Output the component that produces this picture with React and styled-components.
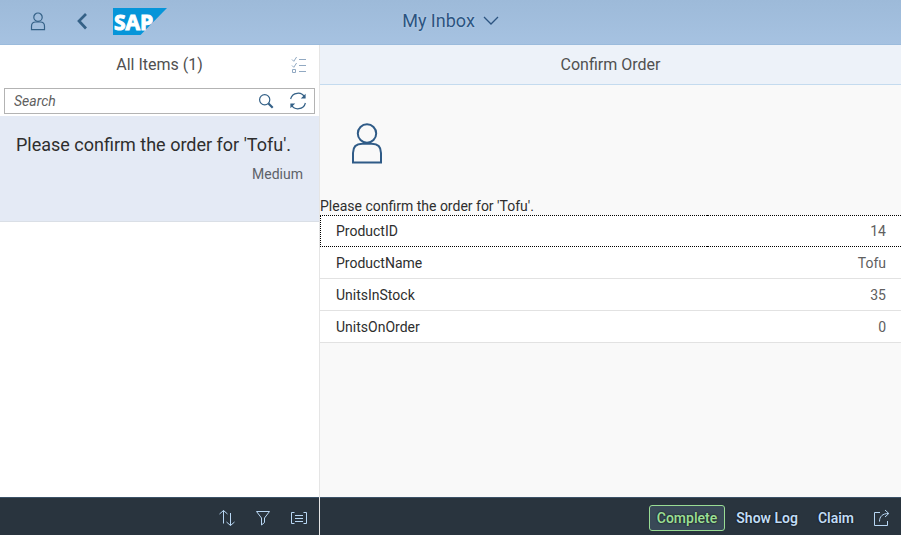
import React from "react";
import styled, { createGlobalStyle, css } from "styled-components";

const GlobalStyle = createGlobalStyle`
  *, *::before, *::after { box-sizing: border-box; }
  body {
    margin: 0;
    font-family: Roboto, "Liberation Sans", sans-serif;
    font-size: 14px;
    line-height: 16px;
    color: #2e2e2e;
    background: #f9f9f9;
  }
  button, input { font: inherit; color: inherit; }
`;

const Page = styled.div`
  display: flex;
  flex-direction: column;
  height: 100vh;
  overflow: hidden;
`;

const Shell = styled.header`
  display: grid;
  grid-template-columns: 1fr auto 1fr;
  align-items: center;
  flex: none;
  height: 45px;
  padding: 0 16px;
  background: linear-gradient(#9dbad9, #a6c2e1);
  border-bottom: 1px solid #9bbbdc;
`;

const ShellActions = styled.div`
  display: flex;
  align-items: center;
`;

const IconButton = styled.button`
  display: flex;
  align-items: center;
  justify-content: center;
  flex: none;
  width: ${(p) => p.$width || 36}px;
  height: 36px;
  padding: 0;
  border: 0;
  background: none;
  color: ${(p) => p.$color || "#346187"};
  cursor: pointer;
  svg { display: block; flex: none; }
`;

const LogoLink = styled.a`
  display: block;
  margin: 0 0 2px 9px;
  svg { display: block; }
`;

const ShellTitle = styled.button`
  display: flex;
  align-items: center;
  gap: 8px;
  padding: 0 0 2px;
  border: 0;
  background: none;
  color: #2c5480;
  font-size: 18px;
  line-height: 24px;
  text-shadow: 0 0 2px #c5daf0;
  cursor: pointer;
`;

const Body = styled.div`
  display: flex;
  flex: 1;
  min-height: 0;
`;

const Master = styled.aside`
  display: flex;
  flex-direction: column;
  flex: none;
  width: 320px;
  background: #fff;
  border-right: 1px solid #e5e5e5;
`;

const Detail = styled.main`
  display: flex;
  flex-direction: column;
  flex: 1;
  min-width: 0;
  background: #f9f9f9;
`;

const MasterHeader = styled.div`
  display: grid;
  grid-template-columns: 36px 1fr 36px;
  align-items: center;
  height: 40px;
  padding: 0 2px;
`;

const Title = styled.h1`
  margin: 0;
  font-size: 16px;
  line-height: 20px;
  font-weight: 400;
  text-align: center;
  color: #505050;
`;

const DetailHeader = styled.div`
  display: flex;
  align-items: center;
  justify-content: center;
  flex: none;
  height: 40px;
  background: #edf2f9;
  border-bottom: 1px solid #c4dbef;
`;

const SearchBox = styled.form`
  display: flex;
  align-items: center;
  flex: none;
  height: 26px;
  margin: 3px 4px 2px;
  border: 1px solid #b3b3b3;
  background: #fff;
`;

const SearchInput = styled.input`
  flex: 1;
  min-width: 0;
  height: 24px;
  padding: 0 9px;
  border: 0;
  outline: 0;
  background: none;
  &::placeholder {
    color: #606060;
    font-style: italic;
    opacity: 1;
  }
`;

const Items = styled.ul`
  flex: 1;
  margin: 0;
  padding: 0;
  list-style: none;
`;

const ItemButton = styled.button`
  display: flex;
  flex-direction: column;
  gap: 8px;
  width: 100%;
  height: 106px;
  padding: 18px 16px;
  border: 0;
  border-bottom: 1px solid #dadfe6;
  background: #e4eaf5;
  text-align: left;
  cursor: pointer;
`;

const ItemTitle = styled.span`
  font-size: 18px;
  line-height: 22px;
  white-space: nowrap;
`;

const ItemPriority = styled.span`
  align-self: flex-end;
  line-height: 20px;
  color: #5d6269;
`;

const Avatar = styled.div`
  padding: 38px 31px 33px;
  color: #2f5b87;
  svg { display: block; }
`;

const Description = styled.p`
  margin: 0;
  padding-bottom: 1px;
`;

const Properties = styled.table`
  width: 100%;
  border-collapse: separate;
  border-spacing: 0;
  background: #fff;
`;

const PropertyRow = styled.tr`
  th, td {
    height: 32px;
    padding: 0 16px;
    border-bottom: 1px solid #e2e2e2;
    font-weight: 400;
  }
  th { text-align: left; }
  td { padding-right: 15px; text-align: right; color: #606060; }
  ${(p) =>
    p.$focused &&
    css`
      th, td { border-top: 1px dotted #000; border-bottom: 1px dotted #000; }
      th { border-left: 1px dotted #000; padding-left: 15px; }
    `}
`;

const Footer = styled.footer`
  display: flex;
  align-items: center;
  justify-content: flex-end;
  flex: none;
  height: 38px;
  margin-top: auto;
  padding: ${(p) => p.$padding};
  border-top: 1px solid #3b5268;
  background: #29343e;
  color: #b8d7f4;
`;

const FooterButton = styled.button`
  height: 26px;
  margin-top: 3px;
  padding: 0 ${(p) => (p.$accept ? 7 : 9)}px;
  border: 1px solid ${(p) => (p.$accept ? "#99dc95" : "transparent")};
  border-radius: 3px;
  background: ${(p) => (p.$accept ? "#394957" : "transparent")};
  color: ${(p) => (p.$accept ? "#99dc95" : "#c0dcf5")};
  margin-right: ${(p) => (p.$accept ? 1 : 0)}px;
  font-weight: 600;
  white-space: nowrap;
  text-shadow: 0 0 2px #000;
  cursor: pointer;
`;

const FooterIcon = styled(IconButton)`
  margin-top: 3px;
  color: #b8d7f4;
`;

const Svg = ({ w, h = w, box, stroke = 1, children }) => (
  <svg width={w} height={h} viewBox={box || `0 0 ${w} ${h}`} fill="none"
    stroke="currentColor" strokeWidth={stroke} aria-hidden="true">
    {children}
  </svg>
);

const PersonSmall = () => (
  <Svg w={16} h={20} stroke={1.2}>
    <circle cx="8" cy="5.2" r="4.2" />
    <path d="M1.5 17.6v-3.4q0-4.2 4.2-4.2h4.6q4.2 0 4.2 4.2v3.4z" />
  </Svg>
);

const PersonLarge = () => (
  <Svg w={32} h={42} stroke={2}>
    <circle cx="16" cy="10.5" r="9.2" />
    <path d="M2 39.5V30Q2 20.8 11.2 20.8h9.6Q30 20.8 30 30v9.5z" />
  </Svg>
);

const SapLogo = () => (
  <svg width="54" height="27" viewBox="0 0 54 27" aria-hidden="true">
    <path d="M0 0h54L27.5 27H0z" fill="#0695d9" />
    <text x="1" y="21.5" fill="#fff" stroke="#fff" strokeWidth="1"
      fontFamily="Open Sans, sans-serif" fontWeight="700" fontSize="21">SAP</text>
  </svg>
);

const properties = [
  ["ProductID", "14"],
  ["ProductName", "Tofu"],
  ["UnitsInStock", "35"],
  ["UnitsOnOrder", "0"],
];

export default function App() {
  return (
    <Page>
      <GlobalStyle />
      <Shell>
        <ShellActions>
          <IconButton $width={44} aria-label="User"><PersonSmall /></IconButton>
          <IconButton $width={44} aria-label="Back">
            <Svg w={12} h={18} stroke={2.7}><path d="M10 1 3 8l7 7.5" /></Svg>
          </IconButton>
          <LogoLink href="#" aria-label="Home"><SapLogo /></LogoLink>
        </ShellActions>
        <ShellTitle>
          My Inbox
          <Svg w={16} h={10} stroke={1.3}><path d="m1 1 7 7 7-7" /></Svg>
        </ShellTitle>
      </Shell>
      <Body>
        <Master>
          <MasterHeader>
            <span />
            <Title>All Items (1)</Title>
            <IconButton $color="#91a9c2" aria-label="Multiple selection">
              <Svg w={16} h={18}>
                <path d="m1 3.5 1.8 1.8L5.6 1M1 9.5l1.8 1.8L5.6 7M1.5 13.5h3v3h-3zM8 3.5h7M8 9.5h7M8 15.5h7" />
              </Svg>
            </IconButton>
          </MasterHeader>
          <SearchBox role="search" onSubmit={(e) => e.preventDefault()}>
            <SearchInput type="search" aria-label="Search" placeholder="Search" />
            <IconButton $width={32} type="submit" aria-label="Find">
              <Svg w={16} stroke={1.2}>
                <circle cx="6.7" cy="6.7" r="5.1" />
                <path d="m10.5 10.5 4.2 4.2" strokeWidth="2.2" />
              </Svg>
            </IconButton>
            <IconButton $width={32} type="button" aria-label="Refresh">
              <Svg w={18} stroke={1.2}>
                <path d="M1.6 7A7.6 7.6 0 0 1 15.8 5.5M16.4 11A7.6 7.6 0 0 1 2.2 12.5" />
                <path d="M16.6 1.7v4.8h-4.8zM1.4 16.3v-4.8h4.8z" fill="currentColor" stroke="none" />
              </Svg>
            </IconButton>
          </SearchBox>
          <Items>
            <li>
              <ItemButton>
                <ItemTitle>Please confirm the order for 'Tofu'.</ItemTitle>
                <ItemPriority>Medium</ItemPriority>
              </ItemButton>
            </li>
          </Items>
          <Footer $padding="0 2px">
            <FooterIcon aria-label="Sort">
              <Svg w={18}>
                <path d="M5.5 14.5V1.5M1.5 5l4-3.5 4 3.5M12.5 4v12.5M8.5 13l4 3.5 4-3.5" />
              </Svg>
            </FooterIcon>
            <FooterIcon aria-label="Filter">
              <Svg w={16}><path d="M1.5 1.5h13L9.5 8v4.5l-3 2.5V8z" /></Svg>
            </FooterIcon>
            <FooterIcon aria-label="Group">
              <Svg w={18} h={14}>
                <path d="M4.5 1.5h-3v11h3M13.5 1.5h3v11h-3M5 4.5h8M5 7.5h8M5 10.5h8" />
              </Svg>
            </FooterIcon>
          </Footer>
        </Master>
        <Detail>
          <DetailHeader><Title as="h2">Confirm Order</Title></DetailHeader>
          <Avatar><PersonLarge /></Avatar>
          <Description>Please confirm the order for 'Tofu'.</Description>
          <Properties>
            <tbody>
              {properties.map(([name, value], i) => (
                <PropertyRow key={name} $focused={i === 0}>
                  <th scope="row">{name}</th>
                  <td>{value}</td>
                </PropertyRow>
              ))}
            </tbody>
          </Properties>
          <Footer $padding="0 1px">
            <FooterButton $accept>Complete</FooterButton>
            <FooterButton>Show Log</FooterButton>
            <FooterButton>Claim</FooterButton>
            <FooterIcon aria-label="Share">
              <Svg w={18}>
                <path d="M7 3.5H1.5v13h13V12M6.5 12.5c0-5 3-8 9-8M12 1l3.8 3.5L12 8" />
              </Svg>
            </FooterIcon>
          </Footer>
        </Detail>
      </Body>
    </Page>
  );
}
